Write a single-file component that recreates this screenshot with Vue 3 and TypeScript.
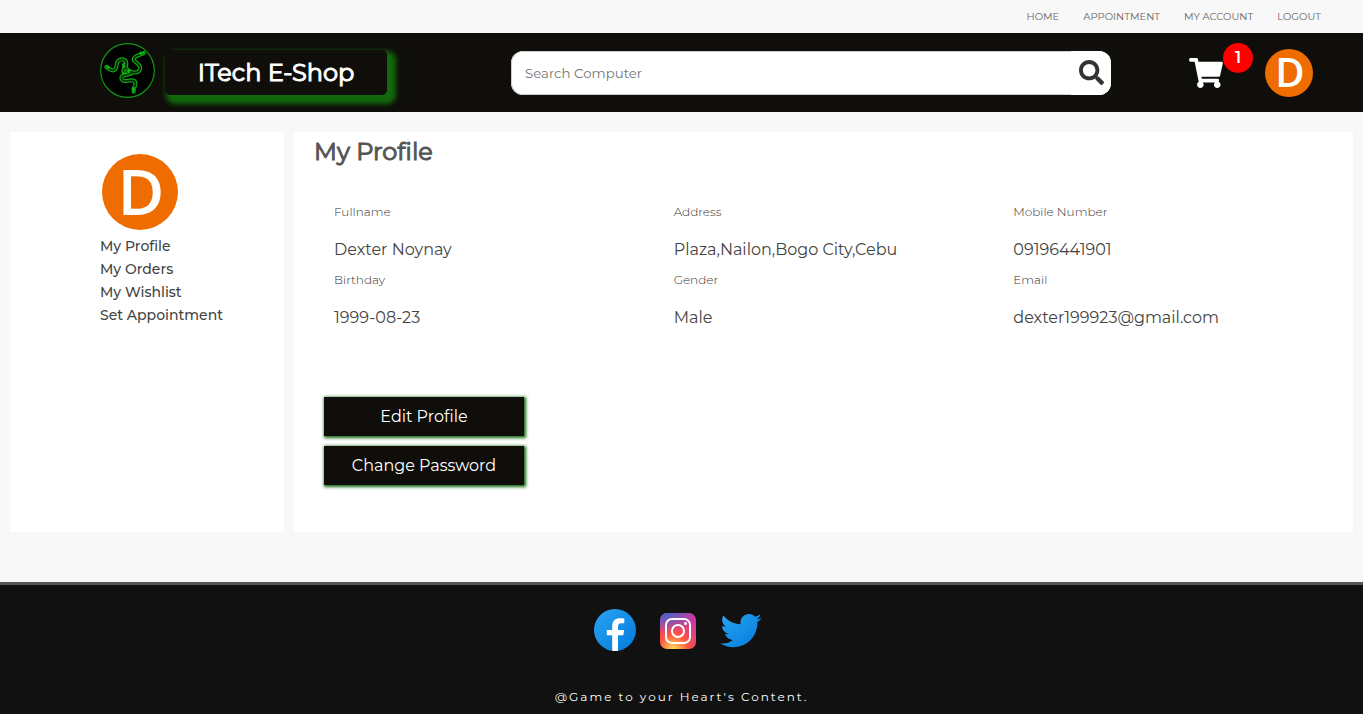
<script setup lang="ts">
import { ref } from 'vue'

interface Field {
  label: string
  value: string
}

const search = ref('')
const initial = 'D'
const cartCount = 1

const topLinks: string[] = ['Home', 'Appointment', 'My Account', 'Logout']
const sideLinks: string[] = ['My Profile', 'My Orders', 'My Wishlist', 'Set Appointment']

const fields: Field[] = [
  { label: 'Fullname', value: 'Dexter Noynay' },
  { label: 'Address', value: 'Plaza,Nailon,Bogo City,Cebu' },
  { label: 'Mobile Number', value: '09196441901' },
  { label: 'Birthday', value: '1999-08-23' },
  { label: 'Gender', value: 'Male' },
  { label: 'Email', value: 'dexter199923@gmail.com' },
]

const snakes: string[] = [
  'M131 31 L118 36 C103 40 97 48 105 55 C114 63 124 69 120 80 C114 92 98 90 88 84 C80 79 77 73 72 66',
  'M19 72 L28 78 C40 86 48 82 49 70 C50 57 56 49 67 49 C80 51 82 62 76 71 C70 79 67 86 75 91',
  'M101 146 L101 136 C109 126 109 113 97 112 L77 114 C63 114 61 102 69 98 C79 93 90 98 97 88',
]
</script>

<template>
  <div class="page">
    <nav class="topbar">
      <a v-for="link in topLinks" :key="link" href="#">{{ link }}</a>
    </nav>

    <header class="header">
      <svg class="logo" viewBox="0 0 165 165" aria-hidden="true">
        <circle cx="82.5" cy="82.5" r="80.5" fill="#000" stroke="#129612" stroke-width="3.5" />
        <g fill="none" stroke-linecap="round" stroke-linejoin="round">
          <path v-for="d in snakes" :key="'o' + d" :d="d" stroke="#12a812" stroke-width="12" />
          <path v-for="d in snakes" :key="'i' + d" :d="d" stroke="#032a03" stroke-width="5" />
        </g>
        <g fill="#14b414">
          <path d="M118 29 L121 25 L126 27 L135 23 L133 31 L120 37 Z" />
          <path d="M15 67 L25 69 L26 66 L31 76 L23 78 Z" />
          <path d="M95 134 L106 132 L104 143 L100 151 L97 142 Z" />
          <path d="M69 58 L77 72 L67 78 Z M82 74 L93 82 L84 92 Z M65 84 L80 92 L67 94 Z" />
        </g>
      </svg>
      <a class="brand" href="#">ITech E-Shop</a>

      <form class="search" role="search" @submit.prevent>
        <input v-model="search" type="text" placeholder="Search Computer" aria-label="Search Computer" />
        <button type="submit" aria-label="Search">
          <svg viewBox="0 0 512 512" aria-hidden="true">
            <path fill="#333" d="M505 442.700 405.300 343c-4.500-4.500-10.600-7-17-7H372c27.600-35.300 44-79.700 44-128C416 93.100 322.900 0 208 0S0 93.100 0 208s93.100 208 208 208c48.300 0 92.700-16.400 128-44v16.300c0 6.400 2.500 12.500 7 17l99.700 99.700c9.400 9.400 24.600 9.400 33.900 0l28.300-28.300c9.400-9.400 9.400-24.600.1-34zM208 336c-70.700 0-128-57.200-128-128 0-70.700 57.200-128 128-128 70.700 0 128 57.200 128 128 0 70.700-57.200 128-128 128z" />
          </svg>
        </button>
      </form>

      <a class="cart" href="#" aria-label="Cart">
        <svg viewBox="0 0 576 512" aria-hidden="true">
          <path fill="#fff" d="M528.120 301.319l47.273-208C578.806 78.301 567.391 64 551.990 64H159.208l-9.166-44.810C147.758 8.021 137.930 0 126.529 0H24C10.745 0 0 10.745 0 24v16c0 13.255 10.745 24 24 24h69.883l70.248 343.435C147.325 417.100 136 435.222 136 456c0 30.928 25.072 56 56 56s56-25.072 56-56c0-15.674-6.447-29.835-16.824-40h209.647C430.447 426.165 424 440.326 424 456c0 30.928 25.072 56 56 56s56-25.072 56-56c0-22.172-12.888-41.332-31.579-50.405l5.517-24.276c3.413-15.018-8.002-29.319-23.403-29.319H218.117l-6.545-32h293.145c11.206 0 20.920-7.754 23.403-18.681z" />
        </svg>
        <span class="badge">{{ cartCount }}</span>
      </a>
      <a class="avatar avatar-small" href="#" aria-label="Account">{{ initial }}</a>
    </header>

    <main class="main">
      <aside class="sidebar">
        <div class="avatar avatar-large">{{ initial }}</div>
        <a v-for="link in sideLinks" :key="link" href="#">{{ link }}</a>
      </aside>

      <section class="profile">
        <h1>My Profile</h1>
        <dl class="fields">
          <div v-for="field in fields" :key="field.label" class="field">
            <dt>{{ field.label }}</dt>
            <dd>{{ field.value }}</dd>
          </div>
        </dl>
        <div class="actions">
          <button type="button">Edit Profile</button>
          <button type="button">Change Password</button>
        </div>
      </section>
    </main>

    <footer class="footer">
      <div class="social">
        <a href="#" aria-label="Facebook">
          <svg viewBox="0 0 48 48">
            <defs>
              <linearGradient id="fb" x1="0" y1="0" x2="1" y2="1">
                <stop offset="0" stop-color="#2aa4f4" />
                <stop offset="1" stop-color="#007ad9" />
              </linearGradient>
            </defs>
            <circle cx="24" cy="24" r="21" fill="url(#fb)" />
            <path fill="#fff" d="M27 29.300h5.300l.8-5.300H27v-2.900c0-2.200.7-3.900 2.800-3.900h3.500v-4.800c-.6-.1-1.900-.2-4.200-.2-5 0-7.900 2.500-7.900 8.400V24h-5.400v5.300h5.400v15.500c1 .2 2 .2 3 .2s1.900-.1 2.800-.2z" />
          </svg>
        </a>
        <a href="#" aria-label="Instagram">
          <svg viewBox="0 -1 48 48">
            <defs>
              <radialGradient id="ig" cx="19.400" cy="42" r="45" gradientUnits="userSpaceOnUse">
                <stop offset="0" stop-color="#fd5" />
                <stop offset=".33" stop-color="#ff543f" />
                <stop offset=".35" stop-color="#fc5245" />
                <stop offset=".5" stop-color="#e64771" />
                <stop offset=".64" stop-color="#d53e91" />
                <stop offset=".76" stop-color="#cc39a4" />
                <stop offset="1" stop-color="#c837ab" />
              </radialGradient>
              <radialGradient id="igBlue" cx="11.800" cy="5.500" r="29.800" gradientTransform="matrix(1 0 0 .6663 0 1.849)" gradientUnits="userSpaceOnUse">
                <stop offset="0" stop-color="#4168c9" />
                <stop offset="1" stop-color="#4168c9" stop-opacity="0" />
              </radialGradient>
            </defs>
            <rect x="6" y="6" width="36" height="36" rx="7" fill="url(#ig)" />
            <rect x="6" y="6" width="36" height="36" rx="7" fill="url(#igBlue)" />
            <g fill="none" stroke="#fff" stroke-width="2">
              <rect x="12" y="12" width="24" height="24" rx="6" />
              <circle cx="24" cy="24" r="6" />
            </g>
            <circle cx="31.500" cy="16.500" r="1.500" fill="#fff" />
          </svg>
        </a>
        <a href="#" aria-label="Twitter">
          <svg viewBox="3 2 42 42">
            <defs>
              <linearGradient id="tw" x1="0" y1="0" x2="1" y2="1">
                <stop offset="0" stop-color="#2aa4f4" />
                <stop offset="1" stop-color="#007ad9" />
              </linearGradient>
            </defs>
            <path fill="url(#tw)" d="M42 12.429c-1.323.586-2.746.977-4.247 1.162 1.526-.906 2.700-2.351 3.251-4.058-1.428.837-3.010 1.452-4.693 1.776C34.967 9.884 33.050 9 30.926 9c-4.080 0-7.387 3.278-7.387 7.320 0 .572.067 1.129.193 1.670-6.138-.308-11.582-3.226-15.224-7.654-.64 1.082-1 2.349-1 3.686 0 2.541 1.301 4.778 3.285 6.096-1.211-.037-2.351-.374-3.349-.914v.086c0 3.551 2.547 6.508 5.923 7.181-.617.169-1.269.263-1.941.263-.477 0-.942-.054-1.392-.135.940 2.902 3.667 5.023 6.898 5.086-2.528 1.960-5.712 3.134-9.174 3.134-.598 0-1.183-.034-1.761-.104C9.268 36.786 13.152 38 17.321 38c13.585 0 21.017-11.156 21.017-20.834 0-.317-.010-.633-.025-.945 1.450-1.024 2.700-2.316 3.687-3.792" />
          </svg>
        </a>
      </div>
      <p>@Game to your Heart's Content.</p>
    </footer>
  </div>
</template>

<style>
body {
  margin: 0;
  background: #f8f8f8;
}
</style>

<style scoped>
.page {
  min-height: 100vh;
  display: flex;
  flex-direction: column;
  font-family: Montserrat, Inter, "Liberation Sans", sans-serif;
  color: #444;
}

a {
  color: inherit;
  text-decoration: none;
}

.topbar {
  display: flex;
  justify-content: flex-end;
  gap: 24px;
  padding: 0 42px;
  font-size: 10px;
  line-height: 33px;
  text-transform: uppercase;
  color: #666;
}

.header {
  display: flex;
  align-items: center;
  height: 79px;
  padding: 0 50px 0 100px;
  background: #0f0e0a;
}

.logo {
  width: 55px;
  height: 55px;
  margin: 0 10px 4px 0;
  flex: none;
}

.brand {
  flex: none;
  width: 222px;
  border-radius: 5px;
  background: #0f0e0a;
  box-shadow: 5px 5px 5px 4px #12690c;
  color: #fff;
  font-size: 24px;
  -webkit-text-stroke: 1px #fff;
  line-height: 45px;
  text-align: center;
}

.search {
  display: flex;
  flex: 0 1 600px;
  height: 44px;
  margin-left: 124px;
  border-radius: 12px;
  overflow: hidden;
  background: #fff;
}

.search input {
  flex: 1;
  min-width: 0;
  box-sizing: border-box;
  padding: 0 13px;
  border: 1px solid #ccc;
  border-right: 0;
  border-radius: 12px 0 0 12px;
  outline: 0;
  background: #fff;
  font-family: inherit;
}

.search input::placeholder {
  color: #757575;
  opacity: 1;
}

.search button {
  display: flex;
  align-items: center;
  justify-content: center;
  width: 40px;
  padding: 0;
  border: 0;
  background: #fff;
}

.search svg {
  width: 25px;
  height: 25px;
}

.cart {
  position: relative;
  flex: none;
  height: 30px;
  margin-left: auto;
  margin-right: 42px;
}

.cart svg {
  width: 34px;
  height: 30px;
}

.badge {
  position: absolute;
  top: -15px;
  left: 34px;
  width: 30px;
  border-radius: 50%;
  background: #f00;
  color: #fff;
  font-size: 16px;
  font-weight: 600;
  line-height: 30px;
  text-align: center;
}

.avatar {
  flex: none;
  box-sizing: border-box;
  padding: 0 0 2px 2px;
  border-radius: 50%;
  background: #ef6c00;
  color: #fff;
  font-family: "Open Sans", sans-serif;
  font-weight: 600;
  text-align: center;
}

.avatar-small {
  width: 48px;
  font-size: 40px;
  line-height: 46px;
}

.avatar-large {
  width: 76px;
  margin: 0 2px 5px;
  font-size: 64px;
  line-height: 74px;
}

.main {
  display: flex;
  gap: 10px;
  padding: 20px 10px 50px;
}

.sidebar {
  display: flex;
  flex-direction: column;
  align-items: flex-start;
  box-sizing: border-box;
  width: 274px;
  padding: 22px 0 0 90px;
  background: #fff;
  font-size: 14px;
  font-weight: 500;
  line-height: 23px;
}

.profile {
  flex: 1;
  box-sizing: border-box;
  min-height: 400px;
  padding: 0 20px 45px;
  background: #fff;
}

h1 {
  margin: 0;
  font-size: 24px;
  font-weight: 400;
  -webkit-text-stroke: 1px #555;
  line-height: 40px;
  color: #555;
}

.fields {
  display: grid;
  grid-template-columns: repeat(3, 1fr);
  margin: 30px 0 59px;
}

.field {
  padding: 0 20px 2px;
}

dt {
  font-size: 12px;
  font-weight: 300;
  line-height: 20px;
  color: #333;
}

dd {
  margin: 10px 0 0;
  font-size: 16px;
  line-height: 36px;
}

.actions {
  display: flex;
  flex-direction: column;
  gap: 10px;
  width: 200px;
  margin-left: 10px;
}

.actions button {
  padding: 0;
  border: 0;
  background: #0f0e0a;
  box-shadow: 1px 1px 3px 1px #12690c;
  color: #fff;
  font: inherit;
  font-size: 16px;
  line-height: 39px;
}

.footer {
  flex: 1;
  padding-top: 21px;
  border-top: 3px solid #555;
  background: #111;
  color: #fff;
  text-align: center;
}

.social {
  display: flex;
  justify-content: center;
  gap: 15px;
  margin-right: 7px;
}

.social svg {
  display: block;
  width: 48px;
  height: 48px;
}

.footer p {
  margin: 33px 0 0;
  font-size: 12px;
  line-height: 20px;
  letter-spacing: 2px;
}
</style>
